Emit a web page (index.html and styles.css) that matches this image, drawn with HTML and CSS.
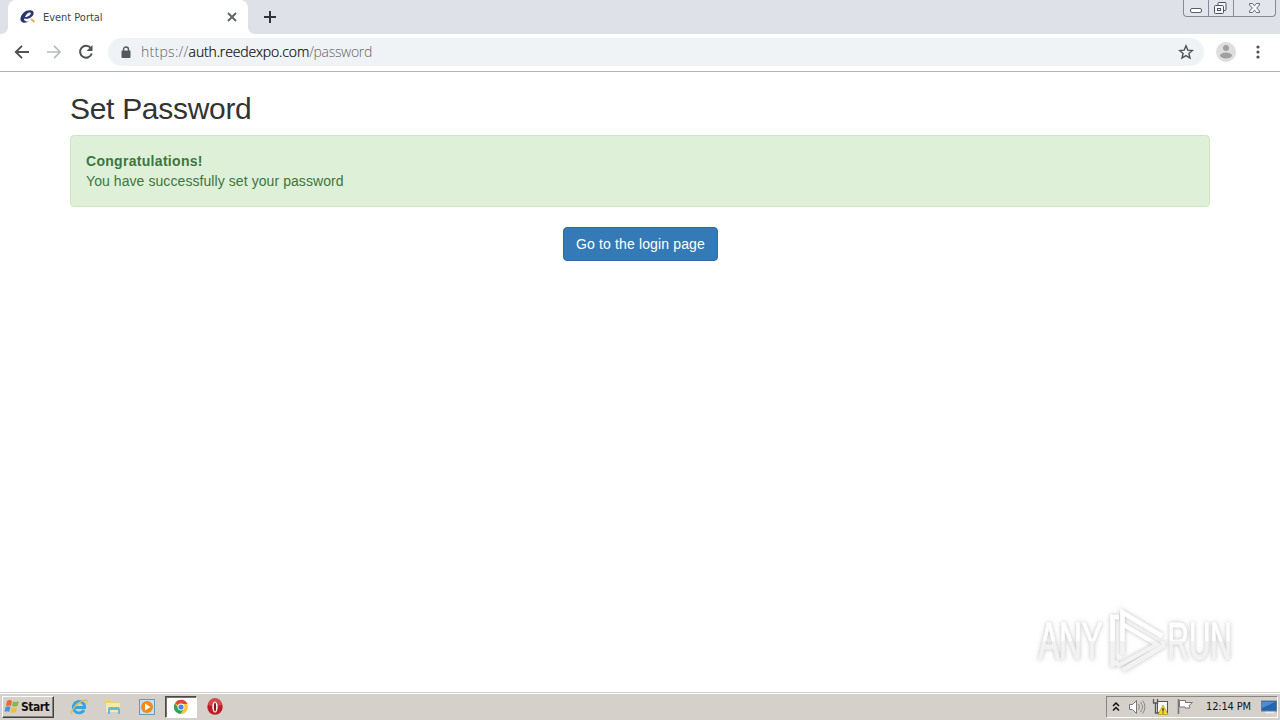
FILE: index.html
```html
<!DOCTYPE html>
<html lang="en">
<head>
<meta charset="utf-8">
<title>Event Portal</title>
<link rel="stylesheet" href="styles.css">
</head>
<body>
<div class="screen">
  <header class="tabstrip">
    <span class="strip-edge"></span>
    <div class="tab">
      <svg class="favicon" width="17" height="16" viewBox="0 0 17 16"><path d="M12.500 1.500C8 0 2.500 4 1.500 9c-.7 4.500 3.500 6 9 3.600C7 13 4.500 11.800 5 9.500c2 .8 6 .3 8.500-2.500C15.500 4.500 15 2.300 12.500 1.500zM6 8C7 5 10 3 11.500 3.700 12.800 4.700 10 8 6 8z" fill="#29366f" fill-rule="evenodd"/><path d="M12 10l3.500 3" stroke="#eda951" stroke-width="1.800"/></svg>
      <span class="tab-title">Event Portal</span>
      <svg class="tab-close" width="10" height="10" viewBox="0 0 10 10"><path d="M1 1l8 8M9 1L1 9" stroke="#5f6368" stroke-width="1.900"/></svg>
    </div>
    <span class="strip-rest">
      <svg class="new-tab" width="14" height="14" viewBox="0 0 14 14"><path d="M7 1v12M1 7h12" stroke="#30333d" stroke-width="2"/></svg>
    </span>
    <div class="window-buttons">
      <span class="wb wb-min"><svg width="25" height="16" viewBox="0 0 25 16"><rect x="6.500" y="8.500" width="11" height="4" rx="1.500" fill="#fff" stroke="#5a5e69"/></svg></span>
      <span class="wb wb-max"><svg width="24" height="16" viewBox="0 0 24 16"><g fill="#f5f6f8" stroke="#4f535e"><rect x="9" y="2.500" width="8" height="8" rx="1"/><rect x="5.500" y="5.500" width="9" height="8" rx="1"/><rect x="8.500" y="8.500" width="3" height="2"/></g></svg></span>
      <span class="wb wb-close"><svg width="41" height="16" viewBox="0 0 41 16"><path d="M15.500 3.500h3l2 2.300 2-2.300h3v1.500L22.700 8l2.800 3v1.500h-3l-2-2.300-2 2.300h-3V11l2.800-3-2.800-3z" fill="#f5f6f8" stroke="#666a75"/></svg></span>
    </div>
  </header>
  <nav class="toolbar">
    <svg class="nav-icon" width="16" height="16" viewBox="0 0 16 16"><path d="M15 8H2M8 1.800L1.800 8 8 14.200" fill="none" stroke="#505256" stroke-width="1.900"/></svg>
    <svg class="nav-icon" width="16" height="16" viewBox="0 0 16 16"><path d="M1 8h13M8 1.800L14.200 8 8 14.200" fill="none" stroke="#b9babc" stroke-width="1.700"/></svg>
    <svg class="nav-icon" width="16" height="16" viewBox="0 0 16 16"><path d="M12.800 4A6 6 0 1 0 13.800 9.500" fill="none" stroke="#505256" stroke-width="2"/><path d="M14.500 1v6h-6z" fill="#505256"/></svg>
    <div class="omnibox">
      <svg class="lock" width="10" height="13" viewBox="0 0 10 13"><path d="M2.500 6V3.500a2.500 2.500 0 0 1 5 0V6" fill="none" stroke="#55585d" stroke-width="1.400"/><rect x=".5" y="4.500" width="9" height="7.500" rx="1" fill="#55585d"/></svg>
      <span class="url"><span class="u-scheme">https://</span><span class="u-host">auth.reedexpo.com</span><span class="u-path">/password</span></span>
      <svg class="star" width="16" height="16" viewBox="0 0 16 16"><path d="M8 1.800l1.800 4.300 4.600.4-3.500 3 1.100 4.500L8 11.600 4 14l1.100-4.500-3.500-3 4.600-.4z" fill="none" stroke="#505256" stroke-width="1.400"/></svg>
    </div>
    <svg class="avatar" width="20" height="20" viewBox="0 0 20 20"><circle cx="10" cy="10" r="10" fill="#dededf"/><circle cx="10" cy="6" r="3" fill="#a0a0a1"/><ellipse cx="10" cy="13.500" rx="6" ry="2.900" fill="#a0a0a1"/></svg>
    <svg class="menu" width="4" height="14" viewBox="0 0 4 14"><g fill="#505256"><circle cx="2" cy="2" r="1.600"/><circle cx="2" cy="7" r="1.600"/><circle cx="2" cy="12" r="1.600"/></g></svg>
  </nav>
  <main class="page">
    <h1 class="heading"><span>Set Password</span></h1>
    <div class="alert"><strong class="alert-title">Congratulations!</strong><span class="alert-text">You have successfully set your password</span></div>
    <div class="actions"><a class="login-button">Go to the login page</a></div>
    <svg class="watermark" width="214" height="74" viewBox="1028 604 214 74">
      <defs>
        <linearGradient id="fade" gradientUnits="userSpaceOnUse" x1="0" y1="610" x2="0" y2="672"><stop offset="0" stop-color="#fff"/><stop offset=".49" stop-color="#fff"/><stop offset=".51" stop-color="#f2f2f2"/><stop offset="1" stop-color="#f2f2f2"/></linearGradient>
        <linearGradient id="fade-text" gradientUnits="userSpaceOnUse" x1="0" y1="-49" x2="0" y2="13"><stop offset="0" stop-color="#fff"/><stop offset=".49" stop-color="#fff"/><stop offset=".51" stop-color="#f2f2f2"/><stop offset="1" stop-color="#f2f2f2"/></linearGradient>
        <filter id="halo" filterUnits="userSpaceOnUse" x="1028" y="604" width="214" height="74"><feDropShadow dx="0" dy="0" stdDeviation="1.900" flood-color="#777" flood-opacity=".5"/></filter>
      </defs>
      <g filter="url(#halo)">
        <g class="mark-text" fill="url(#fade-text)" stroke="url(#fade-text)" stroke-width=".8"><text transform="translate(1038.500 659) scale(.6 1)">ANY</text><text transform="translate(1167.500 659) scale(.57 1)">RUN</text></g>
        <g fill="none" stroke="url(#fade)" stroke-width="4.500"><path d="M1122.500 655V612.500L1162 636"/><path d="M1123 624.500L1157 644.500 1117 666" stroke-width="4"/><path d="M1119 617h-6.500v47.500l6-3"/><path d="M1163 641v5l-40 24"/></g>
      </g>
    </svg>
  </main>
  <footer class="taskbar">
    <div class="start"><svg width="17" height="16" viewBox="0 0 17 16"><path d="M3 2q3-2 5 0L7 7q-2-1-5 0z" fill="#e66a35"/><path d="M9 2.500q3 1 6-.5l-1.500 5q-3 1-5.500 0z" fill="#80b84c"/><path d="M1.500 8q3-1.500 5 0l-1.300 5Q3 11.700.5 13z" fill="#4f91d5"/><path d="M7.700 8.300q3 1 5.500 0L12 13q-3 1.500-5.500.3z" fill="#f1bd3c"/></svg><span class="start-label">Start</span></div>
    <div class="launch">
      <span class="app"><svg width="18" height="18" viewBox="0 0 18 18"><path d="M14 12A5.700 5.700 0 1 1 14.700 9.500H5" fill="none" stroke="#35a4df" stroke-width="2.800"/><path d="M2 16C-.5 12 11 1.500 16.500 2c1 .5.500 2-.5 3.500" fill="none" stroke="#e4bc46" stroke-width="1.300"/></svg></span>
      <span class="app"><svg width="18" height="18" viewBox="0 0 18 18"><path d="M1 2h5l1 2h8v9H1z" fill="#ecd171"/><path d="M2 5h14v9H2z" fill="#f8eaa4"/><path d="M4 16v-5q0-2 2-2h8q2 0 2 2v5h-2v-4H6v4z" fill="#66b9dc"/></svg></span>
      <span class="app"><svg width="18" height="18" viewBox="0 0 18 18"><rect x="1.500" y="1.500" width="15" height="15" fill="#c4e2f4" stroke="#5a9ed0"/><circle cx="9" cy="9" r="6" fill="#f28a1d"/><path d="M7 5.500v7L12.500 9z" fill="#fff"/></svg></span>
      <span class="app app-active"><svg width="16" height="16" viewBox="0 0 16 16"><circle cx="8" cy="8" r="7" fill="#fbc834"/><path d="M8 8L2 4.200A7 7 0 0 1 14.500 5H8z" fill="#de4939"/><path d="M2 4.300A7 7 0 0 0 7.500 15L11 9.500 5 9z" fill="#2ea35b"/><circle cx="8" cy="8" r="3.400" fill="#fff"/><circle cx="8" cy="8" r="2.600" fill="#4587e8"/></svg></span>
      <span class="app"><svg width="18" height="18" viewBox="0 0 18 18"><circle cx="9" cy="9" r="7.700" fill="#b91e24"/><path d="M2 7a7 7 0 0 1 14 0q-7 2-14 0z" fill="#cf4a4a"/><ellipse cx="9" cy="9" rx="2.700" ry="5.500" fill="#fff"/><ellipse cx="9" cy="9" rx="1.100" ry="4.500" fill="#861518"/></svg></span>
    </div>
    <div class="tray">
      <svg class="chev" width="8" height="10" viewBox="0 0 8 10"><path d="M1 4l3-3 3 3M1 8.500l3-3 3 3" fill="none" stroke="#111" stroke-width="1.500"/></svg>
      <svg class="sound" width="18" height="16" viewBox="0 0 18 16"><path d="M1.500 5.500h3l4-4v13l-4-4h-3z" fill="#fff" stroke="#77777a"/><path d="M10.500 5q2 3 0 6M12.500 3q4 5 0 10M14.700 1.500q4.500 6.500 0 13" fill="none" stroke="#88888b"/></svg>
      <svg class="network" width="18" height="18" viewBox="0 0 18 18"><rect x="5.500" y="3.500" width="10" height="11" fill="#f6f6f6" stroke="#555"/><path d="M1.500 1v4h4V1M3.500 5v10H8" fill="none" stroke="#555" stroke-width="1.300"/><path d="M11 7l5 9.500H6z" fill="#f8d92d" stroke="#b29a24" stroke-width=".7"/><path d="M11 10v3.500m0 1v1" stroke="#333" stroke-width="1.300"/></svg>
      <svg class="flag" width="17" height="17" viewBox="0 0 17 17"><path d="M1.500 1v15" stroke="#77777a" stroke-width="1.600"/><path d="M2.500 2.500h6v2h7l-3.500 3 1 2.500H8V9H2.500z" fill="#fff" stroke="#77777a"/></svg>
      <time class="clock">12:14 PM</time>
      <svg class="desktop" width="16" height="14" viewBox="0 0 16 14"><rect x=".5" y="1" width="15" height="10" fill="#2567ae" stroke="#63799b"/><path d="M1 2h13L1 8z" fill="#4d8dd1"/><path d="M4 12.500h9" stroke="#e7edf3" stroke-width="1.500"/></svg>
    </div>
  </footer>
</div>
</body>
</html>
```
FILE: styles.css
```css
* { box-sizing: border-box; }
body { margin: 0; overflow: hidden; background: #fff; font-family: "Liberation Sans", Arial, sans-serif; }
svg { display: block; flex: none; }
.screen { width: 1280px; height: 720px; display: flex; flex-direction: column; }
.tabstrip { height: 34px; display: flex; flex: none; background: linear-gradient(#dee1e8 0 20px, #fff 20px); }
.strip-edge { width: 8px; background: #dee1e8; border-bottom-right-radius: 7px; }
.tab { width: 240px; height: 34px; display: flex; align-items: center; padding: 0 11px; background: #fff; border-radius: 8px 8px 0 0; }
.tab-title { font: 11px "DejaVu Sans Condensed", "DejaVu Sans", sans-serif; letter-spacing: -.03px; color: #44464a; margin-left: 7px; white-space: nowrap; }
.tab-close { margin-left: auto; }
.strip-rest { flex: 1; display: flex; align-items: center; padding-left: 15px; background: #dee1e8; border-bottom-left-radius: 7px; }
.window-buttons { display: flex; align-items: flex-start; padding-right: 4px; background: #dee1e8; }
.wb { height: 17px; border: 1px solid #858a96; border-top: 0; border-left: 0; background: #e2e5eb; overflow: hidden; }
.wb-min { width: 26px; border-left: 1px solid #858a96; border-bottom-left-radius: 4px; }
.wb-max { width: 25px; }
.wb-close { width: 42px; border-bottom-right-radius: 4px; }
.toolbar { height: 38px; flex: none; display: flex; align-items: center; padding: 0 20px 1px 14px; border-bottom: 1px solid #b2b3b4; background: #fff; }
.nav-icon { margin-right: 16px; }
.omnibox { width: 1096px; height: 28px; margin-left: -2px; padding: 0 10px 0 13px; display: flex; align-items: center; border-radius: 14px; background: #f0f3f5; }
.url { margin: -1px 0 0 10px; font: 300 14px "Open Sans", "Noto Sans", sans-serif; white-space: nowrap; color: #5f6469; }
.u-scheme { letter-spacing: .28px; }
.u-host { color: #08090b; letter-spacing: -.14px; -webkit-text-stroke: .2px #08090b; }
.u-path { letter-spacing: -.32px; }
.star { margin-left: auto; }
.avatar { margin-left: 12px; }
.menu { margin-left: auto; }
.page { position: relative; flex: 1; padding: 20px 70px 0; }
.heading { margin: 0 0 10px; height: 33px; font-size: 30px; line-height: 33px; font-weight: 400; color: #333; letter-spacing: -.3px; }
.alert { height: 72px; padding: 15px; border: 1px solid #d0e6bf; border-radius: 4px; background: #dff0d8; color: #3c763d; font-size: 14px; line-height: 20px; display: flex; flex-direction: column; align-items: flex-start; }
.alert-title { letter-spacing: .3px; }
.alert-text { letter-spacing: .075px; }
.actions { display: flex; justify-content: center; margin-top: 20px; padding-left: 1px; }
.login-button { width: 155px; height: 34px; border: 1px solid #2e6da4; border-radius: 4px; background: #337ab7; color: #fff; font-size: 14px; line-height: 32px; letter-spacing: .14px; text-align: center; white-space: nowrap; }
.watermark { position: absolute; left: 1028px; top: 532px; }
.mark-text { font: 52px "Liberation Sans", Arial, sans-serif; }
.taskbar { height: 28px; flex: none; display: flex; align-items: center; background: #d5d1ca; border-top: 1px solid #d5d1ca; box-shadow: inset 0 1px #fff; padding: 0 2px 0; }
.start { width: 52px; height: 22px; display: flex; align-items: center; background: #d5d1ca; border: 1px solid #fff; border-right-color: #414141; border-bottom-color: #414141; box-shadow: inset -1px -1px #85827c; padding-left: 1px; }
.start-label { font: bold 12px "DejaVu Sans Condensed", "DejaVu Sans", sans-serif; letter-spacing: -.5px; color: #111; }
.launch { display: flex; margin-left: 9px; gap: 2px; }
.app { width: 32px; height: 22px; display: flex; align-items: center; justify-content: center; }
.app-active { background: #fff; border: 1px solid #4b4944; border-right-color: #fff; border-bottom-color: #fff; box-shadow: inset 1px 1px #77736d; }
.tray { width: 172px; height: 22px; margin-left: auto; display: flex; align-items: center; border: 1px solid #8b8780; border-right-color: #fff; border-bottom-color: #fff; padding-left: 5px; }
.sound { margin-left: 8px; }
.network { margin-left: 6px; }
.flag { margin-left: 7px; }
.clock { margin-left: 12px; font: 11px "DejaVu Sans Condensed", "DejaVu Sans", sans-serif; letter-spacing: -.15px; color: #161616; white-space: nowrap; }
.desktop { margin-left: auto; }
```
